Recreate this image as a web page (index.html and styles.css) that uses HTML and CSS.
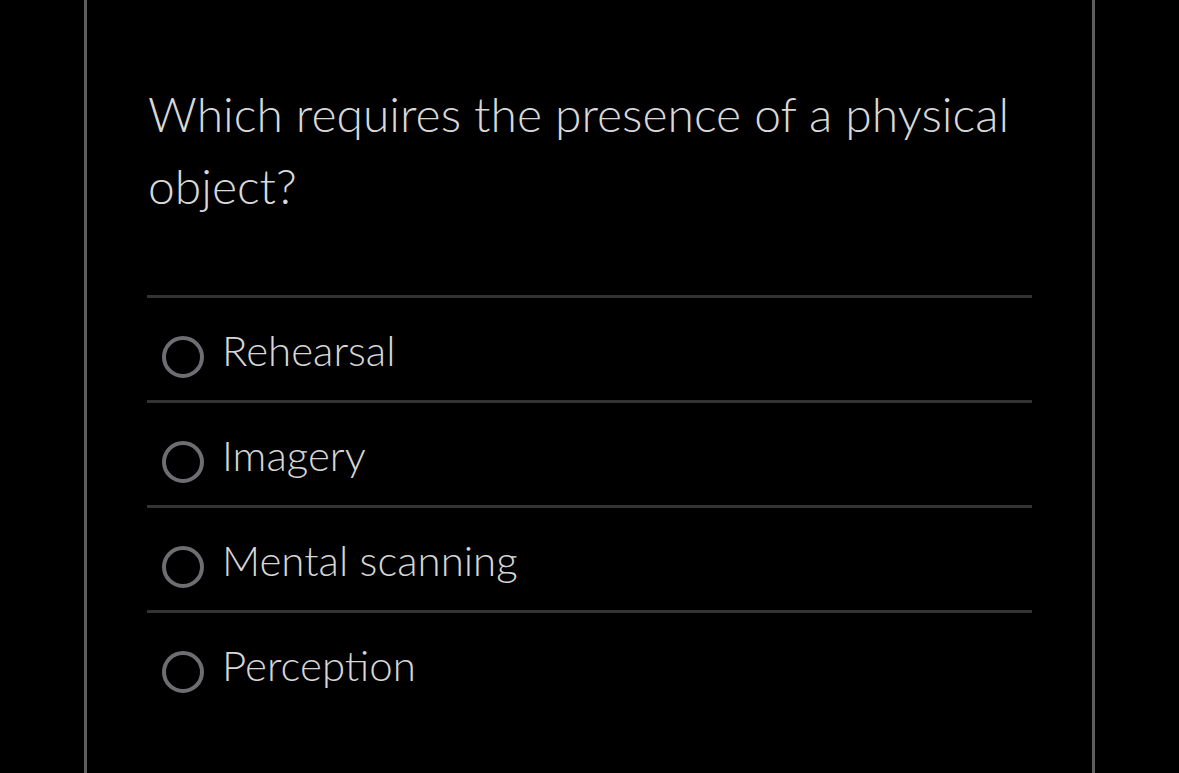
FILE: index.html
```html
<!DOCTYPE html>
<html>
<head>
<meta charset="utf-8">
<link rel="stylesheet" href="styles.css">
</head>
<body>
<div class="page">
  <div class="card">
    <h1 class="question">Which requires the presence of a physical object?</h1>
    <ul class="options">
      <li class="option"><span class="radio"></span><span class="label">Rehearsal</span></li>
      <li class="option"><span class="radio"></span><span class="label">Imagery</span></li>
      <li class="option"><span class="radio"></span><span class="label">Mental scanning</span></li>
      <li class="option"><span class="radio"></span><span class="label">Perception</span></li>
    </ul>
  </div>
</div>
</body>
</html>
```
FILE: styles.css
```css
html, body {
  margin: 0;
  padding: 0;
  background: #000;
}
body {
  font-family: "Lato Light", "Lato", "Liberation Sans", sans-serif;
  font-weight: 300;
  color: #d6d6d6;
}
.page {
  height: 773px;
  overflow: hidden;
  padding-left: 84px;
}
.card {
  width: 1011px;
  height: 773px;
  border-left: 3px solid #5e5e5e;
  border-right: 3px solid #5e5e5e;
  padding: 0 60px;
  box-sizing: border-box;
}
.question {
  margin: 0;
  padding-top: 78px;
  padding-left: 1px;
  font-size: 48px;
  font-weight: 300;
  line-height: 72px;
  color: #d8d8d8;
}
.options {
  list-style: none;
  margin: 73px 0 0 0;
  padding: 0;
}
.option {
  display: flex;
  align-items: flex-start;
  border-top: 3px solid #333;
  padding: 38px 0 22px 15px;
  height: 42px;
}
.radio {
  width: 42px;
  height: 42px;
  box-sizing: border-box;
  border: 4.5px solid #6e6e72;
  border-radius: 50%;
  flex: none;
}
.label {
  margin-left: 18px;
  font-size: 42px;
  line-height: 42px;
  margin-top: -7px;
  color: #d6d6d6;
}
```
